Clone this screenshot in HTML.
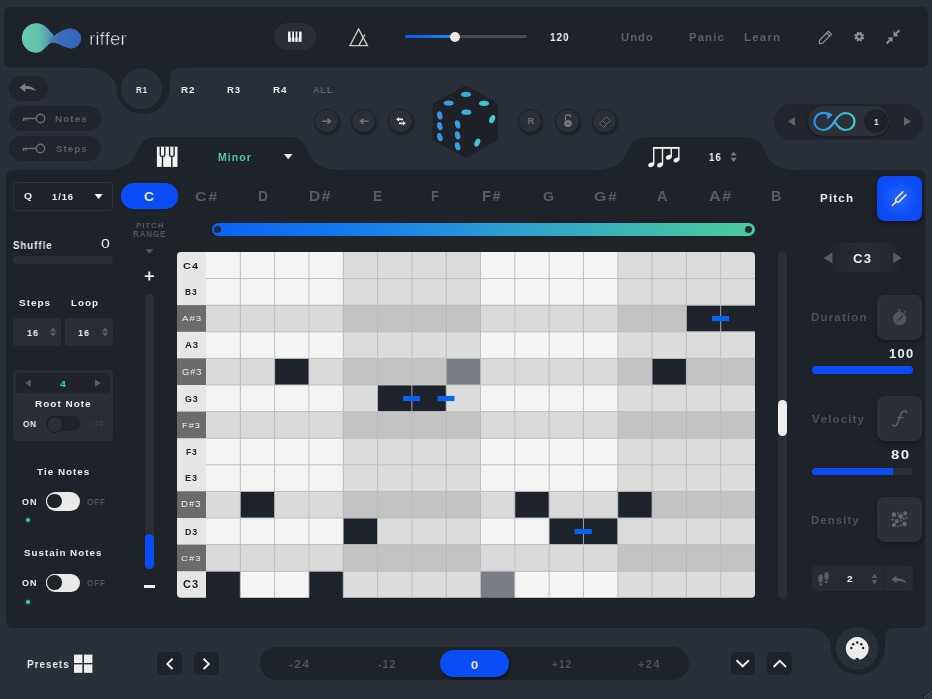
<!DOCTYPE html>
<html><head><meta charset="utf-8"><style>
html,body{margin:0;padding:0;}
body{width:932px;height:699px;overflow:hidden;background:#292f38;position:relative;font-family:"Liberation Sans", sans-serif;}
.abs{position:absolute;}
.t{position:absolute;white-space:nowrap;-webkit-font-smoothing:antialiased;will-change:transform;font-kerning:none;}
</style></head><body>
<svg class="abs" width="932" height="699" viewBox="0 0 932 699" style="left:0;top:0"><rect x="4" y="7" width="924" height="60.5" rx="6" fill="#1e232a"/><path d="M80,60 H190 V67.9 H179.8 Q169.8,67.9 169.8,77.9 V87.5 A27,26.5 0 0 1 142.8,114 A26.5,26.5 0 0 1 116.3,87.5 C116.3,78 104,67.9 88,67.9 H80 Z" fill="#1e232a"/><circle cx="141.5" cy="88.7" r="20.4" fill="#292f38"/><rect x="6" y="170" width="919.5" height="458" rx="7" fill="#1e232a"/><path d="M103,171 V170 C127,170 134,160 137.3,151.5 C140.3,143 145,136.9 157,136.9 H289 C300,136.9 305,143 308,151.5 C311,160 318,170 342,170 V171 Z" fill="#1e232a"/><path d="M593,171 V170 C617,170 624,160 627.3,151.5 C630.3,143 635,136.9 647,136.9 H746 C757,136.9 762,143 765,151.5 C768,160 775,170 799,170 V171 Z" fill="#1e232a"/><path d="M800,620 H900 V627.8 H895 Q885,627.8 885,637.8 V648.3 A27,26.3 0 0 1 858,674.6 A27,26.3 0 0 1 831,648.3 C831,637 821,628 805,627.8 H800 Z" fill="#1e232a"/><circle cx="857.2" cy="648.3" r="21.3" fill="#292f38"/></svg><svg class="abs" style="left:0;top:0" width="140" height="70" viewBox="0 0 140 70">
<defs><linearGradient id="lg" x1="21" y1="0" x2="82" y2="0" gradientUnits="userSpaceOnUse">
<stop offset="0" stop-color="#6acaac"/><stop offset="0.3" stop-color="#62c1ab"/><stop offset="0.5" stop-color="#4c95b6"/><stop offset="0.62" stop-color="#3a6cbd"/><stop offset="1" stop-color="#3363bd"/></linearGradient></defs>
<path d="M36.6,23.3 C44.8,23.3 49.2,30.6 54.4,35.9 C59,31.6 64.6,28.5 71.2,28.5 A9.95,9.95 0 0 1 71.2,48.4 C64.2,48.4 58.6,42.6 52.7,42.6 C47.2,42.6 44.4,52.8 36.6,52.8 A14.75,14.75 0 0 1 36.6,23.3 Z" fill="url(#lg)"/>
<path d="M47,42.8 C50,38 52,36.4 54.4,35.9 C57,38.5 58.8,40.6 60.6,44.4 C58,43.3 55.5,42.6 52.7,42.6 C50.7,42.6 49,42.7 47,42.8 Z" fill="#4a70b8" opacity="0.55"/>
</svg><div class="t" style="left:88.85px;top:29.74px;font-size:18.519px;line-height:18.519px;color:#f6f6f6;font-weight:normal;letter-spacing:0.000px;transform:scaleX(1.020);transform-origin:0 0;-webkit-text-stroke:0.55px #1e232a;">riffer</div><div class="abs" style="left:274px;top:23px;width:42px;height:27px;border-radius:13.5px;background:#2a2d35"></div><svg class="abs" style="left:287px;top:31px" width="16" height="12" viewBox="0 0 16 12">
<rect x="1" y="0.6" width="13.6" height="10.2" fill="#efefef"/>
<path d="M4.4,0.6 V6.5 M7.8,0.6 V6.5 M11.2,0.6 V6.5" stroke="#1e232a" stroke-width="1.6"/>
<path d="M4.4,6 V10.8 M7.8,6 V10.8 M11.2,6 V10.8" stroke="#1e232a" stroke-width="0.8"/>
</svg><svg class="abs" style="left:345px;top:24px" width="28" height="26" viewBox="345 24 28 26">
<path d="M358.6,29 L350,45.6 H367.4 Z" fill="none" stroke="#c6c6c6" stroke-width="1.4" stroke-linejoin="miter"/>
<path d="M364.8,34.5 L358.8,45.6" fill="none" stroke="#c6c6c6" stroke-width="1.4"/>
</svg><div class="abs" style="left:405px;top:35.3px;width:121.5px;height:3px;border-radius:1.5px;background:#484b53"></div><div class="abs" style="left:405px;top:35.3px;width:50px;height:3px;border-radius:1.5px;background:linear-gradient(90deg,#0a5cf5,#1b86f0)"></div><div class="abs" style="left:450px;top:32px;width:10px;height:10px;border-radius:5px;background:#e9e9e9"></div><div class="t" style="left:549.58px;top:31.76px;font-size:11.017px;line-height:11.017px;color:#f0f0f0;font-weight:bold;letter-spacing:1.102px;transform:scaleX(0.900);transform-origin:0 0;">120</div><div class="t" style="left:621.33px;top:32.04px;font-size:11.166px;line-height:11.166px;color:#5b5f67;font-weight:bold;letter-spacing:1.117px;transform:scaleX(0.995);transform-origin:0 0;">Undo</div><div class="t" style="left:688.94px;top:32.62px;font-size:10.485px;line-height:10.485px;color:#5b5f67;font-weight:bold;letter-spacing:1.049px;transform:scaleX(1.082);transform-origin:0 0;">Panic</div><div class="t" style="left:744.22px;top:32.15px;font-size:11.035px;line-height:11.035px;color:#5b5f67;font-weight:bold;letter-spacing:1.104px;transform:scaleX(1.050);transform-origin:0 0;">Learn</div><svg class="abs" style="left:815px;top:26px" width="22" height="22" viewBox="815 26 22 22">
<path d="M828.3,31.2 L831.4,34.3 L822.6,43.1 L819.3,43.5 L819.6,40.2 Z M826.6,32.9 L829.7,36" fill="none" stroke="#8b8e93" stroke-width="1.3" stroke-linejoin="round"/>
</svg><svg class="abs" style="left:852px;top:30px" width="14" height="14" viewBox="852 30 14 14">
<path d="M864.21,37.56 L863.45,39.39 L861.85,38.99 L861.69,39.15 L862.09,40.75 L860.26,41.51 L859.41,40.10 L859.19,40.10 L858.34,41.51 L856.51,40.75 L856.91,39.15 L856.75,38.99 L855.15,39.39 L854.39,37.56 L855.80,36.71 L855.80,36.49 L854.39,35.64 L855.15,33.81 L856.75,34.21 L856.91,34.05 L856.51,32.45 L858.34,31.69 L859.19,33.10 L859.41,33.10 L860.26,31.69 L862.09,32.45 L861.69,34.05 L861.85,34.21 L863.45,33.81 L864.21,35.64 L862.80,36.49 L862.80,36.71 Z M861.00,36.6 A1.7,1.7 0 1 0 857.60,36.6 A1.7,1.7 0 1 0 861.00,36.6 Z" fill="#8b8e93" fill-rule="evenodd"/>
</svg><svg class="abs" style="left:884px;top:28px" width="18" height="18" viewBox="884 28 18 18">
<path d="M893.3,36.4 L893.5,31.1 L898.6,36.2 Z M892.7,37.2 L887.4,37.4 L892.5,42.5 Z" fill="#8b8e93"/>
<path d="M895.6,34 L899.3,30.3 M890.2,39.8 L886.6,43.4" stroke="#8b8e93" stroke-width="2.1"/>
</svg><div class="abs" style="left:9px;top:75.5px;width:38.5px;height:25px;border-radius:12.5px;background:#21242c"></div><svg class="abs" style="left:15px;top:80px" width="26" height="16" viewBox="15 80 26 16">
<path d="M19.5,87.6 L25.2,83.2 V86.1 C30.5,86.1 33.8,87.6 36.2,91.3 C33.4,89.3 30,88.9 25.2,88.9 V92 Z" fill="#7d8086"/>
</svg><div class="abs" style="left:9px;top:105.5px;width:92px;height:25px;border-radius:12.5px;background:#21242c"></div><svg class="abs" style="left:20px;top:105.5px" width="30" height="25" viewBox="20 105.5 30 25">
<circle cx="40.5" cy="118.0" r="4.2" fill="none" stroke="#6b6e74" stroke-width="1.4"/>
<path d="M23,118.0 H36.3 M23.6,118.0 V120.6 M26,118.0 V120.0" stroke="#6b6e74" stroke-width="1.4"/>
</svg><div class="abs" style="left:9px;top:136px;width:92px;height:25px;border-radius:12.5px;background:#21242c"></div><svg class="abs" style="left:20px;top:136px" width="30" height="25" viewBox="20 136 30 25">
<circle cx="40.5" cy="148.5" r="4.2" fill="none" stroke="#6b6e74" stroke-width="1.4"/>
<path d="M23,148.5 H36.3 M23.6,148.5 V151.1 M26,148.5 V150.5" stroke="#6b6e74" stroke-width="1.4"/>
</svg><div class="t" style="left:55.23px;top:114.54px;font-size:9.172px;line-height:9.172px;color:#5b5f67;font-weight:bold;letter-spacing:0.917px;transform:scaleX(1.090);transform-origin:0 0;">Notes</div><div class="t" style="left:56.12px;top:145.06px;font-size:9.053px;line-height:9.053px;color:#5b5f67;font-weight:bold;letter-spacing:0.905px;transform:scaleX(1.085);transform-origin:0 0;">Steps</div><div class="t" style="left:135.65px;top:84.88px;font-size:9.593px;line-height:9.593px;color:#ececec;font-weight:bold;letter-spacing:0.881px;transform:scaleX(0.850);transform-origin:0 0;">R1</div><div class="t" style="left:180.65px;top:85.08px;font-size:9.596px;line-height:9.596px;color:#ececec;font-weight:bold;letter-spacing:0.960px;transform:scaleX(1.016);transform-origin:0 0;">R2</div><div class="t" style="left:227.16px;top:85.10px;font-size:9.444px;line-height:9.444px;color:#ececec;font-weight:bold;letter-spacing:0.944px;transform:scaleX(1.013);transform-origin:0 0;">R3</div><div class="t" style="left:272.64px;top:84.95px;font-size:9.739px;line-height:9.739px;color:#ececec;font-weight:bold;letter-spacing:0.974px;transform:scaleX(1.014);transform-origin:0 0;">R4</div><div class="t" style="left:313.28px;top:84.95px;font-size:9.739px;line-height:9.739px;color:#5f636b;font-weight:bold;letter-spacing:0.974px;transform:scaleX(0.924);transform-origin:0 0;">ALL</div><div class="abs" style="left:314.4px;top:108.7px;width:22.4px;height:22.4px;border-radius:50%;background:#2a2f38;border:1.4px solid #1b1e24;box-shadow:1px 2px 3px rgba(0,0,0,0.35)"></div><svg class="abs" style="left:317px;top:111px" width="20" height="20" viewBox="317 111 20 20"><path d="M322.5,121.3 H330 M327.5,118.8 L330.5,121.3 L327.5,123.8" fill="none" stroke="#6f7278" stroke-width="1.6"/></svg><div class="abs" style="left:351.4px;top:108.7px;width:22.4px;height:22.4px;border-radius:50%;background:#2a2f38;border:1.4px solid #1b1e24;box-shadow:1px 2px 3px rgba(0,0,0,0.35)"></div><svg class="abs" style="left:354px;top:111px" width="20" height="20" viewBox="354 111 20 20"><path d="M368.5,121.3 H361 M363.5,118.8 L360.5,121.3 L363.5,123.8" fill="none" stroke="#6f7278" stroke-width="1.6"/></svg><div class="abs" style="left:388.2px;top:108.7px;width:22.4px;height:22.4px;border-radius:50%;background:#2a2f38;border:1.4px solid #1b1e24;box-shadow:1px 2px 3px rgba(0,0,0,0.35)"></div><svg class="abs" style="left:391px;top:111px" width="20" height="20" viewBox="391 111 20 20"><path d="M396,119.3 L399,117 V118.5 H403 V120.2 H399 V121.6 Z M406,123.3 L403,121 V122.5 H399 V124.2 H403 V125.6 Z" fill="#f0f0f0"/></svg><div class="abs" style="left:518.1px;top:108.7px;width:22.4px;height:22.4px;border-radius:50%;background:#2a2f38;border:1.4px solid #1b1e24;box-shadow:1px 2px 3px rgba(0,0,0,0.35)"></div><div class="t" style="left:520.7px;top:116.9px;width:20px;text-align:center;font-size:9px;line-height:9px;color:#6a6d73;font-weight:bold">R</div><div class="abs" style="left:555.4px;top:108.7px;width:22.4px;height:22.4px;border-radius:50%;background:#2a2f38;border:1.4px solid #1b1e24;box-shadow:1px 2px 3px rgba(0,0,0,0.35)"></div><svg class="abs" style="left:558px;top:111px" width="20" height="20" viewBox="558 111 20 20"><path d="M565.4,120 V117.3 A2.6,2.6 0 0 1 570.6,117.3" fill="none" stroke="#6f7278" stroke-width="1.3"/><circle cx="568" cy="123.5" r="3.8" fill="#6f7278"/><circle cx="568" cy="123.5" r="0.8" fill="#2b2f38"/></svg><div class="abs" style="left:592.4px;top:108.7px;width:22.4px;height:22.4px;border-radius:50%;background:#2a2f38;border:1.4px solid #1b1e24;box-shadow:1px 2px 3px rgba(0,0,0,0.35)"></div><svg class="abs" style="left:595px;top:111px" width="20" height="20" viewBox="595 111 20 20"><path d="M602.5,126.5 L599.5,123.5 L606.5,116.5 L610.5,120.5 L603.5,127.5 Z M602.5,120.5 L606.5,124.5" fill="none" stroke="#60636a" stroke-width="1"/></svg><svg class="abs" style="left:425px;top:80px" width="80" height="85" viewBox="425 80 80 85">
<path d="M465.7,90 L494,105.8 L494,137.6 L465.7,153.6 L436.6,137.6 L436.6,105.8 Z" fill="#1e2128" stroke="#1e2128" stroke-width="8" stroke-linejoin="round"/>
<ellipse cx="466" cy="94.3" rx="5" ry="2.6" transform="rotate(0 466 94.3)" fill="#3aa9dc"/><ellipse cx="448.7" cy="103.1" rx="5" ry="2.6" transform="rotate(0 448.7 103.1)" fill="#3a9de0"/><ellipse cx="484" cy="103.3" rx="5" ry="2.6" transform="rotate(0 484 103.3)" fill="#3cc7d4"/><ellipse cx="466.3" cy="112.2" rx="5" ry="2.6" transform="rotate(0 466.3 112.2)" fill="#3ab0da"/><ellipse cx="439.8" cy="115.5" rx="2.6" ry="4.2" transform="rotate(-15 439.8 115.5)" fill="#3a8fe6"/><ellipse cx="439.8" cy="126.2" rx="2.6" ry="4.2" transform="rotate(-15 439.8 126.2)" fill="#3a8fe6"/><ellipse cx="439.8" cy="137.1" rx="2.6" ry="4.2" transform="rotate(-15 439.8 137.1)" fill="#3a92e4"/><ellipse cx="457.6" cy="124.4" rx="2.6" ry="4.2" transform="rotate(-15 457.6 124.4)" fill="#3a9be0"/><ellipse cx="457.6" cy="135.3" rx="2.6" ry="4.2" transform="rotate(-15 457.6 135.3)" fill="#3a9ce0"/><ellipse cx="457.6" cy="146.3" rx="2.6" ry="4.2" transform="rotate(-15 457.6 146.3)" fill="#3aa0de"/><ellipse cx="492.2" cy="119.1" rx="2.6" ry="4.3" transform="rotate(25 492.2 119.1)" fill="#3fd1cf"/><ellipse cx="477.3" cy="142.6" rx="2.6" ry="4.3" transform="rotate(25 477.3 142.6)" fill="#3cc4d2"/></svg><div class="abs" style="left:774px;top:104px;width:149px;height:35.5px;border-radius:18px;background:#22252d"></div><div class="abs" style="left:807.5px;top:106.2px;width:81.5px;height:29.6px;border-radius:15px;background:#2c3039;box-shadow:0 1px 3px rgba(0,0,0,0.4)"></div><div class="abs" style="left:864.2px;top:109.4px;width:24px;height:24px;border-radius:12px;background:#1e2128"></div><div class="t" style="left:873.58px;top:117.05px;font-size:9.739px;line-height:9.739px;color:#f0f0f0;font-weight:bold;letter-spacing:0.000px;transform:scaleX(0.850);transform-origin:0 0;">1</div><svg class="abs" style="left:785px;top:112px" width="130" height="18" viewBox="785 112 130 18"><path d="M788,121.4 L795,117 V125.8 Z" fill="#5f636a"/><path d="M911,121.4 L904,117 V125.8 Z" fill="#5f636a"/></svg><svg class="abs" style="left:810px;top:108px" width="50" height="26" viewBox="810 108 50 26">
<defs><linearGradient id="inf" x1="813" y1="0" x2="855" y2="0" gradientUnits="userSpaceOnUse"><stop offset="0" stop-color="#2f8ae8"/><stop offset="1" stop-color="#3fd0d0"/></linearGradient></defs>
<path d="M831,115 C827,112.5 823,112.5 820,113.5 C815.5,115.5 814.5,120 814.5,122 C814.5,126 818,130 823.5,130 C829.5,130 833,124 834.5,121.5 C836,119 839.5,113 845.5,113 C851,113 854.5,117 854.5,121.5 C854.5,126 851,130 845.5,130 C839.5,130 836,124 834.5,121.5" fill="none" stroke="url(#inf)" stroke-width="2.2" stroke-linecap="round"/>
<path d="M826,111.8 L832.6,114.6 L827.6,119.6 Z" fill="#2f95e6"/>
</svg><svg class="abs" style="left:155px;top:145px" width="25" height="24" viewBox="155 145 25 24">
<rect x="156.9" y="146.7" width="20.6" height="20.2" fill="#f2f2f2"/>
<path d="M160.3,146.7 V155 Q160.3,156.4 161.7,156.4 H163.4 Q164.8,156.4 164.8,155 V146.7" fill="none" stroke="#1e232a" stroke-width="1.4"/>
<path d="M169.6,146.7 V155 Q169.6,156.4 171,156.4 H172.7 Q174.1,156.4 174.1,155 V146.7" fill="none" stroke="#1e232a" stroke-width="1.4"/>
<path d="M162.5,156.4 V167 M171.8,156.4 V167" stroke="#1e232a" stroke-width="1.4"/>
</svg><div class="t" style="left:218.49px;top:152.57px;font-size:10.077px;line-height:10.077px;color:#4fcb9e;font-weight:bold;letter-spacing:1.008px;transform:scaleX(1.048);transform-origin:0 0;">Minor</div><svg class="abs" style="left:280px;top:150px" width="16" height="14" viewBox="280 150 16 14"><path d="M283.9,154 H292.5 L288.2,159.3 Z" fill="#f0f0f0"/></svg><svg class="abs" style="left:645px;top:144px" width="38" height="26" viewBox="645 144 38 26">
<path d="M652.9,147.9 H679.4" stroke="#f0f0f0" stroke-width="1.9"/>
<path d="M653.7,147 V164.3 M662.5,147 V164.3 M671.3,147 V156.8 M678.8,147 V159.5" stroke="#f0f0f0" stroke-width="1.4"/>
<ellipse cx="651.2" cy="164.8" rx="3.1" ry="2.2" fill="#f0f0f0" transform="rotate(-25 651.2 164.8)"/>
<ellipse cx="660" cy="165" rx="3.1" ry="2.2" fill="#f0f0f0" transform="rotate(-25 660 165)"/>
<ellipse cx="668.8" cy="157.2" rx="3.1" ry="2.2" fill="#f0f0f0" transform="rotate(-25 668.8 157.2)"/>
<ellipse cx="676.5" cy="159.9" rx="3.1" ry="2.2" fill="#f0f0f0" transform="rotate(-25 676.5 159.9)"/>
</svg><div class="t" style="left:708.59px;top:152.09px;font-size:10.876px;line-height:10.876px;color:#f0f0f0;font-weight:bold;letter-spacing:1.088px;transform:scaleX(0.884);transform-origin:0 0;">16</div><svg class="abs" style="left:727px;top:149px" width="12" height="16" viewBox="727 149 12 16"><path d="M730.4,155.5 L733.6,151.8 L736.8,155.5 Z M730.4,157.8 L733.6,161.9 L736.8,157.8 Z" fill="#76797f"/></svg><div class="abs" style="left:13px;top:182px;width:97.5px;height:27px;border-radius:4px;border:1px solid #30343c"></div><div class="t" style="left:23.67px;top:191.97px;font-size:9.200px;line-height:9.200px;color:#ececec;font-weight:bold;letter-spacing:0.000px;transform:scaleX(1.126);transform-origin:0 0;">Q</div><div class="t" style="left:51.71px;top:193.03px;font-size:8.729px;line-height:8.729px;color:#ececec;font-weight:bold;letter-spacing:0.873px;transform:scaleX(1.072);transform-origin:0 0;">1/16</div><svg class="abs" style="left:92px;top:191px" width="12" height="10" viewBox="92 191 12 10"><path d="M94.7,194 H102.6 L98.65,199.2 Z" fill="#f0f0f0"/></svg><div class="t" style="left:13.42px;top:240.55px;font-size:10.213px;line-height:10.213px;color:#ececec;font-weight:bold;letter-spacing:1.021px;transform:scaleX(0.950);transform-origin:0 0;">Shuffle</div><div class="t" style="left:100.68px;top:237.58px;font-size:12.288px;line-height:12.288px;color:#f2f2f2;font-weight:normal;letter-spacing:0.000px;transform:scaleX(1.300);transform-origin:0 0;">0</div><div class="abs" style="left:13px;top:256.2px;width:100px;height:7.4px;border-radius:3.7px;background:#2a2d35"></div><div class="t" style="left:19.11px;top:297.99px;font-size:9.495px;line-height:9.495px;color:#ececec;font-weight:bold;letter-spacing:0.949px;transform:scaleX(1.052);transform-origin:0 0;">Steps</div><div class="t" style="left:71.14px;top:297.88px;font-size:9.603px;line-height:9.603px;color:#ececec;font-weight:bold;letter-spacing:0.960px;transform:scaleX(1.027);transform-origin:0 0;">Loop</div><div class="abs" style="left:13px;top:317.8px;width:48.3px;height:28px;border-radius:3px;background:#292d35"></div><div class="t" style="left:26.83px;top:328.00px;font-size:9.463px;line-height:9.463px;color:#ececec;font-weight:bold;letter-spacing:0.946px;transform:scaleX(0.959);transform-origin:0 0;">16</div><svg class="abs" style="left:47px;top:325px" width="12" height="14" viewBox="47 325 12 14"><path d="M50,331.5 L53.1,327.6 L56.2,331.5 Z M50,332.8 L53.1,336.7 L56.2,332.8 Z" fill="#5a5d64"/></svg><div class="abs" style="left:64.5px;top:317.8px;width:48.3px;height:28px;border-radius:3px;background:#292d35"></div><div class="t" style="left:78.43px;top:328.00px;font-size:9.463px;line-height:9.463px;color:#ececec;font-weight:bold;letter-spacing:0.946px;transform:scaleX(0.959);transform-origin:0 0;">16</div><svg class="abs" style="left:98.5px;top:325px" width="12" height="14" viewBox="98.5 325 12 14"><path d="M101.5,331.5 L104.6,327.6 L107.7,331.5 Z M101.5,332.8 L104.6,336.7 L107.7,332.8 Z" fill="#5a5d64"/></svg><div class="abs" style="left:13px;top:369.7px;width:100px;height:71.5px;border-radius:4px;background:#292d35"></div><div class="abs" style="left:16px;top:372.9px;width:94.3px;height:20px;border-radius:4px;background:#20232a"></div><svg class="abs" style="left:20px;top:376px" width="86" height="14" viewBox="20 376 86 14"><path d="M25,383 L30.7,379.3 V386.8 Z M100.9,383 L95.1,379.3 V386.8 Z" fill="#595c63"/></svg><div class="t" style="left:59.84px;top:378.83px;font-size:9.884px;line-height:9.884px;color:#2fd3a6;font-weight:bold;letter-spacing:0.000px;transform:scaleX(1.058);transform-origin:0 0;">4</div><div class="t" style="left:34.53px;top:399.74px;font-size:9.172px;line-height:9.172px;color:#ececec;font-weight:bold;letter-spacing:0.917px;transform:scaleX(1.089);transform-origin:0 0;">Root Note</div><div class="t" style="left:22.96px;top:420.08px;font-size:8.898px;line-height:8.898px;color:#ececec;font-weight:bold;letter-spacing:0.890px;transform:scaleX(0.919);transform-origin:0 0;">ON</div><div class="t" style="left:88.89px;top:420.08px;font-size:8.898px;line-height:8.898px;color:#3a3d44;font-weight:bold;letter-spacing:0.155px;transform:scaleX(0.850);transform-origin:0 0;">OFF</div><div class="abs" style="left:46.2px;top:416px;width:33.4px;height:15.4px;border-radius:7.7px;background:#1e232a"></div><div class="abs" style="left:46.5px;top:416.3px;width:14.8px;height:14.8px;border-radius:50%;background:#2a2e36;border:0.5px solid #1a1c22"></div><div class="t" style="left:36.99px;top:467.79px;font-size:9.123px;line-height:9.123px;color:#ececec;font-weight:bold;letter-spacing:0.912px;transform:scaleX(1.080);transform-origin:0 0;">Tie Notes</div><div class="abs" style="left:45.8px;top:492.2px;width:34.3px;height:18.8px;border-radius:9.4px;background:#e9e9e9"></div><div class="abs" style="left:46.3px;top:492.7px;width:14.6px;height:14.6px;border-radius:50%;background:#1e232a;border:1.6px solid #f0f0f0"></div><div class="t" style="left:22.03px;top:497.98px;font-size:8.898px;line-height:8.898px;color:#ececec;font-weight:bold;letter-spacing:0.890px;transform:scaleX(1.017);transform-origin:0 0;">ON</div><div class="t" style="left:87.46px;top:497.98px;font-size:8.898px;line-height:8.898px;color:#52565e;font-weight:bold;letter-spacing:0.890px;transform:scaleX(0.922);transform-origin:0 0;">OFF</div><div class="abs" style="left:25.8px;top:518.2px;width:4.2px;height:4.2px;border-radius:50%;background:#3dcf98;box-shadow:0 0 3px rgba(61,207,152,0.5)"></div><div class="t" style="left:24.02px;top:548.79px;font-size:9.123px;line-height:9.123px;color:#ececec;font-weight:bold;letter-spacing:0.912px;transform:scaleX(1.079);transform-origin:0 0;">Sustain Notes</div><div class="abs" style="left:45.8px;top:573.7px;width:34.3px;height:18.8px;border-radius:9.4px;background:#e9e9e9"></div><div class="abs" style="left:46.3px;top:574.2px;width:14.6px;height:14.6px;border-radius:50%;background:#1e232a;border:1.6px solid #f0f0f0"></div><div class="t" style="left:22.03px;top:579.46px;font-size:9.039px;line-height:9.039px;color:#ececec;font-weight:bold;letter-spacing:0.904px;">ON</div><div class="t" style="left:87.46px;top:579.46px;font-size:9.039px;line-height:9.039px;color:#52565e;font-weight:bold;letter-spacing:0.904px;transform:scaleX(0.907);transform-origin:0 0;">OFF</div><div class="abs" style="left:25.6px;top:599.5px;width:4.2px;height:4.2px;border-radius:50%;background:#3dcf98;box-shadow:0 0 3px rgba(61,207,152,0.5)"></div><div class="abs" style="left:121.2px;top:183px;width:57.2px;height:25.6px;border-radius:12.8px;background:#0a4cf6"></div><div class="t" style="left:143.92px;top:190.15px;font-size:13.135px;line-height:13.135px;color:#ececec;font-weight:bold;letter-spacing:0.000px;transform:scaleX(1.071);transform-origin:0 0;">C</div><div class="t" style="left:195.24px;top:189.91px;font-size:13.418px;line-height:13.418px;color:#585c64;font-weight:bold;letter-spacing:1.342px;transform:scaleX(1.196);transform-origin:0 0;">C#</div><div class="t" style="left:258.19px;top:189.71px;font-size:13.808px;line-height:13.808px;color:#585c64;font-weight:bold;letter-spacing:0.000px;transform:scaleX(0.980);transform-origin:0 0;">D</div><div class="t" style="left:309.26px;top:189.71px;font-size:13.808px;line-height:13.808px;color:#585c64;font-weight:bold;letter-spacing:1.381px;transform:scaleX(1.124);transform-origin:0 0;">D#</div><div class="t" style="left:372.81px;top:189.71px;font-size:13.808px;line-height:13.808px;color:#585c64;font-weight:bold;letter-spacing:0.000px;transform:scaleX(0.968);transform-origin:0 0;">E</div><div class="t" style="left:430.56px;top:189.71px;font-size:13.808px;line-height:13.808px;color:#585c64;font-weight:bold;letter-spacing:0.000px;transform:scaleX(0.914);transform-origin:0 0;">F</div><div class="t" style="left:481.52px;top:189.71px;font-size:13.808px;line-height:13.808px;color:#585c64;font-weight:bold;letter-spacing:1.381px;transform:scaleX(1.058);transform-origin:0 0;">F#</div><div class="t" style="left:543.22px;top:189.91px;font-size:13.418px;line-height:13.418px;color:#585c64;font-weight:bold;letter-spacing:0.000px;transform:scaleX(1.049);transform-origin:0 0;">G</div><div class="t" style="left:593.95px;top:189.91px;font-size:13.418px;line-height:13.418px;color:#585c64;font-weight:bold;letter-spacing:1.342px;transform:scaleX(1.180);transform-origin:0 0;">G#</div><div class="t" style="left:657.24px;top:189.71px;font-size:13.808px;line-height:13.808px;color:#585c64;font-weight:bold;letter-spacing:0.000px;transform:scaleX(1.058);transform-origin:0 0;">A</div><div class="t" style="left:708.50px;top:189.71px;font-size:13.808px;line-height:13.808px;color:#585c64;font-weight:bold;letter-spacing:1.381px;transform:scaleX(1.164);transform-origin:0 0;">A#</div><div class="t" style="left:771.35px;top:189.71px;font-size:13.808px;line-height:13.808px;color:#585c64;font-weight:bold;letter-spacing:0.000px;transform:scaleX(1.033);transform-origin:0 0;">B</div><div class="t" style="left:135.66px;top:221.80px;font-size:8.051px;line-height:8.051px;color:#51555d;font-weight:bold;letter-spacing:0.805px;transform:scaleX(1.008);transform-origin:0 0;">PITCH</div><div class="t" style="left:132.96px;top:231.38px;font-size:8.192px;line-height:8.192px;color:#51555d;font-weight:bold;letter-spacing:0.819px;transform:scaleX(0.981);transform-origin:0 0;">RANGE</div><svg class="abs" style="left:143px;top:247px" width="14" height="9" viewBox="143 247 14 9"><path d="M145.6,249.3 H153.4 L149.5,253.4 Z" fill="#585c64"/></svg><svg class="abs" style="left:140px;top:267px" width="20" height="20" viewBox="140 267 20 20"><path d="M149.3,271.6 V280.6 M144.8,276.1 H153.9" stroke="#f0f0f0" stroke-width="1.9"/></svg><div class="abs" style="left:145.3px;top:294px;width:8.4px;height:275px;border-radius:4.2px;background:#2a2e36"></div><div class="abs" style="left:144.9px;top:533.7px;width:9.1px;height:35px;border-radius:4.5px;background:#0a4cf6"></div><div class="abs" style="left:144px;top:585.2px;width:10.9px;height:2.5px;background:#f0f0f0"></div><div class="abs" style="left:211.5px;top:223.1px;width:543.7px;height:12.9px;border-radius:6.5px;background:linear-gradient(90deg,#0a63f6 0%,#157aee 25%,#2899d6 50%,#3bb4b7 75%,#4dca9b 100%)"></div><div class="abs" style="left:214.3px;top:226.1px;width:6.8px;height:6.8px;border-radius:50%;background:#262a36"></div><div class="abs" style="left:745px;top:226.1px;width:6.8px;height:6.8px;border-radius:50%;background:#262a36"></div><svg class="abs" style="left:0;top:0" width="932" height="699" viewBox="0 0 932 699"><clipPath id="gc"><rect x="177" y="252" width="578" height="345.79999999999995" rx="4"/></clipPath><g clip-path="url(#gc)"><rect x="177" y="252.00" width="29" height="27.10" fill="#e6e6e6"/><rect x="206.00" y="252.00" width="34.61" height="26.90" fill="#f4f4f4"/><rect x="240.31" y="252.00" width="34.61" height="26.90" fill="#f4f4f4"/><rect x="274.62" y="252.00" width="34.61" height="26.90" fill="#f4f4f4"/><rect x="308.94" y="252.00" width="34.61" height="26.90" fill="#f4f4f4"/><rect x="343.25" y="252.00" width="34.61" height="26.90" fill="#dcdcdc"/><rect x="377.56" y="252.00" width="34.61" height="26.90" fill="#dcdcdc"/><rect x="411.88" y="252.00" width="34.61" height="26.90" fill="#dcdcdc"/><rect x="446.19" y="252.00" width="34.61" height="26.90" fill="#dcdcdc"/><rect x="480.50" y="252.00" width="34.61" height="26.90" fill="#f4f4f4"/><rect x="514.81" y="252.00" width="34.61" height="26.90" fill="#f4f4f4"/><rect x="549.12" y="252.00" width="34.61" height="26.90" fill="#f4f4f4"/><rect x="583.44" y="252.00" width="34.61" height="26.90" fill="#f4f4f4"/><rect x="617.75" y="252.00" width="34.61" height="26.90" fill="#dcdcdc"/><rect x="652.06" y="252.00" width="34.61" height="26.90" fill="#dcdcdc"/><rect x="686.38" y="252.00" width="34.61" height="26.90" fill="#dcdcdc"/><rect x="720.69" y="252.00" width="34.61" height="26.90" fill="#dcdcdc"/><rect x="177" y="278.60" width="29" height="27.10" fill="#e6e6e6"/><rect x="206.00" y="278.60" width="34.61" height="26.90" fill="#f4f4f4"/><rect x="240.31" y="278.60" width="34.61" height="26.90" fill="#f4f4f4"/><rect x="274.62" y="278.60" width="34.61" height="26.90" fill="#f4f4f4"/><rect x="308.94" y="278.60" width="34.61" height="26.90" fill="#f4f4f4"/><rect x="343.25" y="278.60" width="34.61" height="26.90" fill="#dcdcdc"/><rect x="377.56" y="278.60" width="34.61" height="26.90" fill="#dcdcdc"/><rect x="411.88" y="278.60" width="34.61" height="26.90" fill="#dcdcdc"/><rect x="446.19" y="278.60" width="34.61" height="26.90" fill="#dcdcdc"/><rect x="480.50" y="278.60" width="34.61" height="26.90" fill="#f4f4f4"/><rect x="514.81" y="278.60" width="34.61" height="26.90" fill="#f4f4f4"/><rect x="549.12" y="278.60" width="34.61" height="26.90" fill="#f4f4f4"/><rect x="583.44" y="278.60" width="34.61" height="26.90" fill="#f4f4f4"/><rect x="617.75" y="278.60" width="34.61" height="26.90" fill="#dcdcdc"/><rect x="652.06" y="278.60" width="34.61" height="26.90" fill="#dcdcdc"/><rect x="686.38" y="278.60" width="34.61" height="26.90" fill="#dcdcdc"/><rect x="720.69" y="278.60" width="34.61" height="26.90" fill="#dcdcdc"/><rect x="177" y="305.20" width="29" height="27.10" fill="#6b6b6b"/><rect x="206.00" y="305.20" width="34.61" height="26.90" fill="#dadada"/><rect x="240.31" y="305.20" width="34.61" height="26.90" fill="#dadada"/><rect x="274.62" y="305.20" width="34.61" height="26.90" fill="#dadada"/><rect x="308.94" y="305.20" width="34.61" height="26.90" fill="#dadada"/><rect x="343.25" y="305.20" width="34.61" height="26.90" fill="#c3c3c3"/><rect x="377.56" y="305.20" width="34.61" height="26.90" fill="#c3c3c3"/><rect x="411.88" y="305.20" width="34.61" height="26.90" fill="#c3c3c3"/><rect x="446.19" y="305.20" width="34.61" height="26.90" fill="#c3c3c3"/><rect x="480.50" y="305.20" width="34.61" height="26.90" fill="#dadada"/><rect x="514.81" y="305.20" width="34.61" height="26.90" fill="#dadada"/><rect x="549.12" y="305.20" width="34.61" height="26.90" fill="#dadada"/><rect x="583.44" y="305.20" width="34.61" height="26.90" fill="#dadada"/><rect x="617.75" y="305.20" width="34.61" height="26.90" fill="#c3c3c3"/><rect x="652.06" y="305.20" width="34.61" height="26.90" fill="#c3c3c3"/><rect x="686.38" y="305.20" width="34.61" height="26.90" fill="#1e222a"/><rect x="720.69" y="305.20" width="34.61" height="26.90" fill="#1e222a"/><rect x="177" y="331.80" width="29" height="27.10" fill="#e6e6e6"/><rect x="206.00" y="331.80" width="34.61" height="26.90" fill="#f4f4f4"/><rect x="240.31" y="331.80" width="34.61" height="26.90" fill="#f4f4f4"/><rect x="274.62" y="331.80" width="34.61" height="26.90" fill="#f4f4f4"/><rect x="308.94" y="331.80" width="34.61" height="26.90" fill="#f4f4f4"/><rect x="343.25" y="331.80" width="34.61" height="26.90" fill="#dcdcdc"/><rect x="377.56" y="331.80" width="34.61" height="26.90" fill="#dcdcdc"/><rect x="411.88" y="331.80" width="34.61" height="26.90" fill="#dcdcdc"/><rect x="446.19" y="331.80" width="34.61" height="26.90" fill="#dcdcdc"/><rect x="480.50" y="331.80" width="34.61" height="26.90" fill="#f4f4f4"/><rect x="514.81" y="331.80" width="34.61" height="26.90" fill="#f4f4f4"/><rect x="549.12" y="331.80" width="34.61" height="26.90" fill="#f4f4f4"/><rect x="583.44" y="331.80" width="34.61" height="26.90" fill="#f4f4f4"/><rect x="617.75" y="331.80" width="34.61" height="26.90" fill="#dcdcdc"/><rect x="652.06" y="331.80" width="34.61" height="26.90" fill="#dcdcdc"/><rect x="686.38" y="331.80" width="34.61" height="26.90" fill="#dcdcdc"/><rect x="720.69" y="331.80" width="34.61" height="26.90" fill="#dcdcdc"/><rect x="177" y="358.40" width="29" height="27.10" fill="#6b6b6b"/><rect x="206.00" y="358.40" width="34.61" height="26.90" fill="#dadada"/><rect x="240.31" y="358.40" width="34.61" height="26.90" fill="#dadada"/><rect x="274.62" y="358.40" width="34.61" height="26.90" fill="#1e222a"/><rect x="308.94" y="358.40" width="34.61" height="26.90" fill="#dadada"/><rect x="343.25" y="358.40" width="34.61" height="26.90" fill="#c3c3c3"/><rect x="377.56" y="358.40" width="34.61" height="26.90" fill="#c3c3c3"/><rect x="411.88" y="358.40" width="34.61" height="26.90" fill="#c3c3c3"/><rect x="446.19" y="358.40" width="34.61" height="26.90" fill="#7a7e84"/><rect x="480.50" y="358.40" width="34.61" height="26.90" fill="#dadada"/><rect x="514.81" y="358.40" width="34.61" height="26.90" fill="#dadada"/><rect x="549.12" y="358.40" width="34.61" height="26.90" fill="#dadada"/><rect x="583.44" y="358.40" width="34.61" height="26.90" fill="#dadada"/><rect x="617.75" y="358.40" width="34.61" height="26.90" fill="#c3c3c3"/><rect x="652.06" y="358.40" width="34.61" height="26.90" fill="#1e222a"/><rect x="686.38" y="358.40" width="34.61" height="26.90" fill="#c3c3c3"/><rect x="720.69" y="358.40" width="34.61" height="26.90" fill="#c3c3c3"/><rect x="177" y="385.00" width="29" height="27.10" fill="#e6e6e6"/><rect x="206.00" y="385.00" width="34.61" height="26.90" fill="#f4f4f4"/><rect x="240.31" y="385.00" width="34.61" height="26.90" fill="#f4f4f4"/><rect x="274.62" y="385.00" width="34.61" height="26.90" fill="#f4f4f4"/><rect x="308.94" y="385.00" width="34.61" height="26.90" fill="#f4f4f4"/><rect x="343.25" y="385.00" width="34.61" height="26.90" fill="#dcdcdc"/><rect x="377.56" y="385.00" width="34.61" height="26.90" fill="#1e222a"/><rect x="411.88" y="385.00" width="34.61" height="26.90" fill="#1e222a"/><rect x="446.19" y="385.00" width="34.61" height="26.90" fill="#dcdcdc"/><rect x="480.50" y="385.00" width="34.61" height="26.90" fill="#f4f4f4"/><rect x="514.81" y="385.00" width="34.61" height="26.90" fill="#f4f4f4"/><rect x="549.12" y="385.00" width="34.61" height="26.90" fill="#f4f4f4"/><rect x="583.44" y="385.00" width="34.61" height="26.90" fill="#f4f4f4"/><rect x="617.75" y="385.00" width="34.61" height="26.90" fill="#dcdcdc"/><rect x="652.06" y="385.00" width="34.61" height="26.90" fill="#dcdcdc"/><rect x="686.38" y="385.00" width="34.61" height="26.90" fill="#dcdcdc"/><rect x="720.69" y="385.00" width="34.61" height="26.90" fill="#dcdcdc"/><rect x="177" y="411.60" width="29" height="27.10" fill="#6b6b6b"/><rect x="206.00" y="411.60" width="34.61" height="26.90" fill="#dadada"/><rect x="240.31" y="411.60" width="34.61" height="26.90" fill="#dadada"/><rect x="274.62" y="411.60" width="34.61" height="26.90" fill="#dadada"/><rect x="308.94" y="411.60" width="34.61" height="26.90" fill="#dadada"/><rect x="343.25" y="411.60" width="34.61" height="26.90" fill="#c3c3c3"/><rect x="377.56" y="411.60" width="34.61" height="26.90" fill="#c3c3c3"/><rect x="411.88" y="411.60" width="34.61" height="26.90" fill="#c3c3c3"/><rect x="446.19" y="411.60" width="34.61" height="26.90" fill="#c3c3c3"/><rect x="480.50" y="411.60" width="34.61" height="26.90" fill="#dadada"/><rect x="514.81" y="411.60" width="34.61" height="26.90" fill="#dadada"/><rect x="549.12" y="411.60" width="34.61" height="26.90" fill="#dadada"/><rect x="583.44" y="411.60" width="34.61" height="26.90" fill="#dadada"/><rect x="617.75" y="411.60" width="34.61" height="26.90" fill="#c3c3c3"/><rect x="652.06" y="411.60" width="34.61" height="26.90" fill="#c3c3c3"/><rect x="686.38" y="411.60" width="34.61" height="26.90" fill="#c3c3c3"/><rect x="720.69" y="411.60" width="34.61" height="26.90" fill="#c3c3c3"/><rect x="177" y="438.20" width="29" height="27.10" fill="#e6e6e6"/><rect x="206.00" y="438.20" width="34.61" height="26.90" fill="#f4f4f4"/><rect x="240.31" y="438.20" width="34.61" height="26.90" fill="#f4f4f4"/><rect x="274.62" y="438.20" width="34.61" height="26.90" fill="#f4f4f4"/><rect x="308.94" y="438.20" width="34.61" height="26.90" fill="#f4f4f4"/><rect x="343.25" y="438.20" width="34.61" height="26.90" fill="#dcdcdc"/><rect x="377.56" y="438.20" width="34.61" height="26.90" fill="#dcdcdc"/><rect x="411.88" y="438.20" width="34.61" height="26.90" fill="#dcdcdc"/><rect x="446.19" y="438.20" width="34.61" height="26.90" fill="#dcdcdc"/><rect x="480.50" y="438.20" width="34.61" height="26.90" fill="#f4f4f4"/><rect x="514.81" y="438.20" width="34.61" height="26.90" fill="#f4f4f4"/><rect x="549.12" y="438.20" width="34.61" height="26.90" fill="#f4f4f4"/><rect x="583.44" y="438.20" width="34.61" height="26.90" fill="#f4f4f4"/><rect x="617.75" y="438.20" width="34.61" height="26.90" fill="#dcdcdc"/><rect x="652.06" y="438.20" width="34.61" height="26.90" fill="#dcdcdc"/><rect x="686.38" y="438.20" width="34.61" height="26.90" fill="#dcdcdc"/><rect x="720.69" y="438.20" width="34.61" height="26.90" fill="#dcdcdc"/><rect x="177" y="464.80" width="29" height="27.10" fill="#e6e6e6"/><rect x="206.00" y="464.80" width="34.61" height="26.90" fill="#f4f4f4"/><rect x="240.31" y="464.80" width="34.61" height="26.90" fill="#f4f4f4"/><rect x="274.62" y="464.80" width="34.61" height="26.90" fill="#f4f4f4"/><rect x="308.94" y="464.80" width="34.61" height="26.90" fill="#f4f4f4"/><rect x="343.25" y="464.80" width="34.61" height="26.90" fill="#dcdcdc"/><rect x="377.56" y="464.80" width="34.61" height="26.90" fill="#dcdcdc"/><rect x="411.88" y="464.80" width="34.61" height="26.90" fill="#dcdcdc"/><rect x="446.19" y="464.80" width="34.61" height="26.90" fill="#dcdcdc"/><rect x="480.50" y="464.80" width="34.61" height="26.90" fill="#f4f4f4"/><rect x="514.81" y="464.80" width="34.61" height="26.90" fill="#f4f4f4"/><rect x="549.12" y="464.80" width="34.61" height="26.90" fill="#f4f4f4"/><rect x="583.44" y="464.80" width="34.61" height="26.90" fill="#f4f4f4"/><rect x="617.75" y="464.80" width="34.61" height="26.90" fill="#dcdcdc"/><rect x="652.06" y="464.80" width="34.61" height="26.90" fill="#dcdcdc"/><rect x="686.38" y="464.80" width="34.61" height="26.90" fill="#dcdcdc"/><rect x="720.69" y="464.80" width="34.61" height="26.90" fill="#dcdcdc"/><rect x="177" y="491.40" width="29" height="27.10" fill="#6b6b6b"/><rect x="206.00" y="491.40" width="34.61" height="26.90" fill="#dadada"/><rect x="240.31" y="491.40" width="34.61" height="26.90" fill="#1e222a"/><rect x="274.62" y="491.40" width="34.61" height="26.90" fill="#dadada"/><rect x="308.94" y="491.40" width="34.61" height="26.90" fill="#dadada"/><rect x="343.25" y="491.40" width="34.61" height="26.90" fill="#c3c3c3"/><rect x="377.56" y="491.40" width="34.61" height="26.90" fill="#c3c3c3"/><rect x="411.88" y="491.40" width="34.61" height="26.90" fill="#c3c3c3"/><rect x="446.19" y="491.40" width="34.61" height="26.90" fill="#c3c3c3"/><rect x="480.50" y="491.40" width="34.61" height="26.90" fill="#dadada"/><rect x="514.81" y="491.40" width="34.61" height="26.90" fill="#1e222a"/><rect x="549.12" y="491.40" width="34.61" height="26.90" fill="#dadada"/><rect x="583.44" y="491.40" width="34.61" height="26.90" fill="#dadada"/><rect x="617.75" y="491.40" width="34.61" height="26.90" fill="#1e222a"/><rect x="652.06" y="491.40" width="34.61" height="26.90" fill="#c3c3c3"/><rect x="686.38" y="491.40" width="34.61" height="26.90" fill="#c3c3c3"/><rect x="720.69" y="491.40" width="34.61" height="26.90" fill="#c3c3c3"/><rect x="177" y="518.00" width="29" height="27.10" fill="#e6e6e6"/><rect x="206.00" y="518.00" width="34.61" height="26.90" fill="#f4f4f4"/><rect x="240.31" y="518.00" width="34.61" height="26.90" fill="#f4f4f4"/><rect x="274.62" y="518.00" width="34.61" height="26.90" fill="#f4f4f4"/><rect x="308.94" y="518.00" width="34.61" height="26.90" fill="#f4f4f4"/><rect x="343.25" y="518.00" width="34.61" height="26.90" fill="#1e222a"/><rect x="377.56" y="518.00" width="34.61" height="26.90" fill="#dcdcdc"/><rect x="411.88" y="518.00" width="34.61" height="26.90" fill="#dcdcdc"/><rect x="446.19" y="518.00" width="34.61" height="26.90" fill="#dcdcdc"/><rect x="480.50" y="518.00" width="34.61" height="26.90" fill="#f4f4f4"/><rect x="514.81" y="518.00" width="34.61" height="26.90" fill="#f4f4f4"/><rect x="549.12" y="518.00" width="34.61" height="26.90" fill="#1e222a"/><rect x="583.44" y="518.00" width="34.61" height="26.90" fill="#1e222a"/><rect x="617.75" y="518.00" width="34.61" height="26.90" fill="#dcdcdc"/><rect x="652.06" y="518.00" width="34.61" height="26.90" fill="#dcdcdc"/><rect x="686.38" y="518.00" width="34.61" height="26.90" fill="#dcdcdc"/><rect x="720.69" y="518.00" width="34.61" height="26.90" fill="#dcdcdc"/><rect x="177" y="544.60" width="29" height="27.10" fill="#6b6b6b"/><rect x="206.00" y="544.60" width="34.61" height="26.90" fill="#dadada"/><rect x="240.31" y="544.60" width="34.61" height="26.90" fill="#dadada"/><rect x="274.62" y="544.60" width="34.61" height="26.90" fill="#dadada"/><rect x="308.94" y="544.60" width="34.61" height="26.90" fill="#dadada"/><rect x="343.25" y="544.60" width="34.61" height="26.90" fill="#c3c3c3"/><rect x="377.56" y="544.60" width="34.61" height="26.90" fill="#c3c3c3"/><rect x="411.88" y="544.60" width="34.61" height="26.90" fill="#c3c3c3"/><rect x="446.19" y="544.60" width="34.61" height="26.90" fill="#c3c3c3"/><rect x="480.50" y="544.60" width="34.61" height="26.90" fill="#dadada"/><rect x="514.81" y="544.60" width="34.61" height="26.90" fill="#dadada"/><rect x="549.12" y="544.60" width="34.61" height="26.90" fill="#dadada"/><rect x="583.44" y="544.60" width="34.61" height="26.90" fill="#dadada"/><rect x="617.75" y="544.60" width="34.61" height="26.90" fill="#c3c3c3"/><rect x="652.06" y="544.60" width="34.61" height="26.90" fill="#c3c3c3"/><rect x="686.38" y="544.60" width="34.61" height="26.90" fill="#c3c3c3"/><rect x="720.69" y="544.60" width="34.61" height="26.90" fill="#c3c3c3"/><rect x="177" y="571.20" width="29" height="27.10" fill="#e6e6e6"/><rect x="206.00" y="571.20" width="34.61" height="26.90" fill="#1e222a"/><rect x="240.31" y="571.20" width="34.61" height="26.90" fill="#f4f4f4"/><rect x="274.62" y="571.20" width="34.61" height="26.90" fill="#f4f4f4"/><rect x="308.94" y="571.20" width="34.61" height="26.90" fill="#1e222a"/><rect x="343.25" y="571.20" width="34.61" height="26.90" fill="#dcdcdc"/><rect x="377.56" y="571.20" width="34.61" height="26.90" fill="#dcdcdc"/><rect x="411.88" y="571.20" width="34.61" height="26.90" fill="#dcdcdc"/><rect x="446.19" y="571.20" width="34.61" height="26.90" fill="#dcdcdc"/><rect x="480.50" y="571.20" width="34.61" height="26.90" fill="#7a7e84"/><rect x="514.81" y="571.20" width="34.61" height="26.90" fill="#f4f4f4"/><rect x="549.12" y="571.20" width="34.61" height="26.90" fill="#f4f4f4"/><rect x="583.44" y="571.20" width="34.61" height="26.90" fill="#f4f4f4"/><rect x="617.75" y="571.20" width="34.61" height="26.90" fill="#dcdcdc"/><rect x="652.06" y="571.20" width="34.61" height="26.90" fill="#dcdcdc"/><rect x="686.38" y="571.20" width="34.61" height="26.90" fill="#dcdcdc"/><rect x="720.69" y="571.20" width="34.61" height="26.90" fill="#dcdcdc"/><rect x="206" y="278.10" width="549" height="1" fill="#bfbfbf"/><rect x="206" y="304.70" width="549" height="1" fill="#bfbfbf"/><rect x="206" y="331.30" width="549" height="1" fill="#bfbfbf"/><rect x="206" y="357.90" width="549" height="1" fill="#bfbfbf"/><rect x="206" y="384.50" width="549" height="1" fill="#bfbfbf"/><rect x="206" y="411.10" width="549" height="1" fill="#bfbfbf"/><rect x="206" y="437.70" width="549" height="1" fill="#bfbfbf"/><rect x="206" y="464.30" width="549" height="1" fill="#bfbfbf"/><rect x="206" y="490.90" width="549" height="1" fill="#bfbfbf"/><rect x="206" y="517.50" width="549" height="1" fill="#bfbfbf"/><rect x="206" y="544.10" width="549" height="1" fill="#bfbfbf"/><rect x="206" y="570.70" width="549" height="1" fill="#bfbfbf"/><rect x="239.81" y="252" width="1" height="345.79999999999995" fill="#bdbdbd" opacity="0.85"/><rect x="274.12" y="252" width="1" height="345.79999999999995" fill="#bdbdbd" opacity="0.85"/><rect x="308.44" y="252" width="1" height="345.79999999999995" fill="#bdbdbd" opacity="0.85"/><rect x="342.75" y="252" width="1" height="345.79999999999995" fill="#bdbdbd" opacity="0.85"/><rect x="377.06" y="252" width="1" height="345.79999999999995" fill="#bdbdbd" opacity="0.85"/><rect x="411.38" y="252" width="1" height="345.79999999999995" fill="#bdbdbd" opacity="0.85"/><rect x="445.69" y="252" width="1" height="345.79999999999995" fill="#bdbdbd" opacity="0.85"/><rect x="480.00" y="252" width="1" height="345.79999999999995" fill="#bdbdbd" opacity="0.85"/><rect x="514.31" y="252" width="1" height="345.79999999999995" fill="#bdbdbd" opacity="0.85"/><rect x="548.62" y="252" width="1" height="345.79999999999995" fill="#bdbdbd" opacity="0.85"/><rect x="582.94" y="252" width="1" height="345.79999999999995" fill="#bdbdbd" opacity="0.85"/><rect x="617.25" y="252" width="1" height="345.79999999999995" fill="#bdbdbd" opacity="0.85"/><rect x="651.56" y="252" width="1" height="345.79999999999995" fill="#bdbdbd" opacity="0.85"/><rect x="685.88" y="252" width="1" height="345.79999999999995" fill="#bdbdbd" opacity="0.85"/><rect x="720.19" y="252" width="1" height="345.79999999999995" fill="#bdbdbd" opacity="0.85"/></g><rect x="403.10" y="395.90" width="17" height="5.2" fill="#0a63f0"/><rect x="437.50" y="395.90" width="17" height="5.2" fill="#0a63f0"/><rect x="712.00" y="315.90" width="17" height="5.2" fill="#0a63f0"/><rect x="574.80" y="528.90" width="17" height="5.2" fill="#0a63f0"/></svg><div class="t" style="left:183.15px;top:261.37px;font-size:9.604px;line-height:9.604px;color:#1d1f24;font-weight:bold;letter-spacing:0.960px;transform:scaleX(1.141);transform-origin:0 0;">C4</div><div class="t" style="left:185.24px;top:288.14px;font-size:8.457px;line-height:8.457px;color:#1d1f24;font-weight:bold;letter-spacing:0.846px;transform:scaleX(0.992);transform-origin:0 0;">B3</div><div class="t" style="left:182.08px;top:315.30px;font-size:8.051px;line-height:8.051px;color:#f0f0f0;font-weight:normal;letter-spacing:0.805px;transform:scaleX(1.201);transform-origin:0 0;">A#3</div><div class="t" style="left:185.06px;top:341.12px;font-size:8.598px;line-height:8.598px;color:#1d1f24;font-weight:bold;letter-spacing:0.860px;transform:scaleX(1.112);transform-origin:0 0;">A3</div><div class="t" style="left:181.63px;top:367.78px;font-size:8.898px;line-height:8.898px;color:#f0f0f0;font-weight:normal;letter-spacing:0.890px;transform:scaleX(1.053);transform-origin:0 0;">G#3</div><div class="t" style="left:184.94px;top:394.72px;font-size:8.598px;line-height:8.598px;color:#1d1f24;font-weight:bold;letter-spacing:0.860px;transform:scaleX(1.029);transform-origin:0 0;">G3</div><div class="t" style="left:182.03px;top:421.60px;font-size:8.051px;line-height:8.051px;color:#f0f0f0;font-weight:normal;letter-spacing:0.805px;transform:scaleX(1.161);transform-origin:0 0;">F#3</div><div class="t" style="left:185.63px;top:447.54px;font-size:8.457px;line-height:8.457px;color:#1d1f24;font-weight:bold;letter-spacing:0.846px;transform:scaleX(1.016);transform-origin:0 0;">F3</div><div class="t" style="left:185.10px;top:474.34px;font-size:8.457px;line-height:8.457px;color:#1d1f24;font-weight:bold;letter-spacing:0.846px;transform:scaleX(1.066);transform-origin:0 0;">E3</div><div class="t" style="left:181.41px;top:501.38px;font-size:8.192px;line-height:8.192px;color:#f0f0f0;font-weight:normal;letter-spacing:0.819px;transform:scaleX(1.170);transform-origin:0 0;">D#3</div><div class="t" style="left:185.21px;top:527.52px;font-size:8.598px;line-height:8.598px;color:#1d1f24;font-weight:bold;letter-spacing:0.860px;transform:scaleX(1.031);transform-origin:0 0;">D3</div><div class="t" style="left:181.41px;top:555.10px;font-size:8.051px;line-height:8.051px;color:#f0f0f0;font-weight:normal;letter-spacing:0.805px;transform:scaleX(1.191);transform-origin:0 0;">C#3</div><div class="t" style="left:183.35px;top:579.39px;font-size:10.853px;line-height:10.853px;color:#1d1f24;font-weight:bold;letter-spacing:1.085px;transform:scaleX(1.020);transform-origin:0 0;">C3</div><div class="abs" style="left:778.2px;top:251.7px;width:9px;height:347px;border-radius:4.5px;background:#2a2e36"></div><div class="abs" style="left:778px;top:400.4px;width:9px;height:35.2px;border-radius:4.5px;background:#efefef"></div><div class="t" style="left:820.12px;top:193.15px;font-size:11.030px;line-height:11.030px;color:#ececec;font-weight:bold;letter-spacing:1.103px;transform:scaleX(1.055);transform-origin:0 0;">Pitch</div><div class="abs" style="left:877px;top:176px;width:45px;height:45px;border-radius:8px;background:radial-gradient(circle at 50% 50%,#2a66f8 0%,#0d4df6 55%,#0a48f5 100%);box-shadow:0 2px 4px rgba(0,0,0,0.45)"></div><svg class="abs" style="left:889px;top:188px" width="20" height="20" viewBox="889 188 20 20"><path d="M902.9,191.9 L896.3,198.5 A2.12,2.12 0 0 0 899.3,201.5 L905.9,194.9 M896.4,201.4 L892.3,205.5" fill="none" stroke="#f2f2f2" stroke-width="1.5" stroke-linecap="round"/></svg><div class="abs" style="left:828px;top:243.4px;width:75px;height:29px;background:linear-gradient(90deg,rgba(42,46,54,0) 0%,rgba(42,46,54,0.55) 20%,rgba(42,46,54,0.8) 50%,rgba(42,46,54,0.55) 80%,rgba(42,46,54,0) 100%)"></div><svg class="abs" style="left:820px;top:250px" width="86" height="16" viewBox="820 250 86 16"><path d="M823.5,257.9 L832.4,252.5 V263.2 Z M901.6,257.9 L893.2,252.5 V263.2 Z" fill="#595c63"/></svg><div class="t" style="left:853.06px;top:252.78px;font-size:12.263px;line-height:12.263px;color:#ececec;font-weight:bold;letter-spacing:1.226px;transform:scaleX(1.078);transform-origin:0 0;">C3</div><div class="abs" style="left:877px;top:295px;width:45px;height:45px;border-radius:8px;background:#2b2f38;box-shadow:0 2px 4px rgba(0,0,0,0.35)"></div><svg class="abs" style="left:889px;top:307px" width="22" height="22" viewBox="889 307 22 22"><circle cx="899.6" cy="318.4" r="6.7" fill="#51555c"/><path d="M897.6,309.3 H901.6 L899.6,311.4 Z" fill="#51555c"/><rect x="898.9" y="310.5" width="1.4" height="2.4" fill="#51555c"/><path d="M904.4,312.6 L906,311" stroke="#51555c" stroke-width="1.5"/><path d="M898.2,320.6 L902.6,315.4" stroke="#2b2f38" stroke-width="1.2"/></svg><div class="t" style="left:810.93px;top:312.92px;font-size:10.485px;line-height:10.485px;color:#4e525a;font-weight:bold;letter-spacing:1.049px;transform:scaleX(1.102);transform-origin:0 0;">Duration</div><div class="t" style="left:889.39px;top:347.51px;font-size:12.712px;line-height:12.712px;color:#ececec;font-weight:bold;letter-spacing:1.271px;transform:scaleX(1.017);transform-origin:0 0;">100</div><div class="abs" style="left:812.2px;top:366.3px;width:100.5px;height:7.7px;border-radius:3.9px;background:#0a4cf6"></div><div class="abs" style="left:877px;top:396px;width:45px;height:45px;border-radius:8px;background:#2b2f38;box-shadow:0 2px 4px rgba(0,0,0,0.35)"></div><svg class="abs" style="left:886px;top:406px" width="26" height="24" viewBox="886 406 26 24"><path d="M906.6,412.6 C906.2,410.6 903.2,410.3 901.6,412.6 C900.4,414.4 898.6,421.5 896.8,424.4 C895.6,426.4 893.4,426.6 892.6,424.8" fill="none" stroke="#5d6067" stroke-width="1.5" stroke-linecap="round"/><path d="M897.6,417.6 H903.6" stroke="#5d6067" stroke-width="1.2"/></svg><div class="t" style="left:812.02px;top:413.86px;font-size:10.943px;line-height:10.943px;color:#4e525a;font-weight:bold;letter-spacing:1.094px;transform:scaleX(1.047);transform-origin:0 0;">Velocity</div><div class="t" style="left:891.22px;top:448.69px;font-size:12.853px;line-height:12.853px;color:#ececec;font-weight:bold;letter-spacing:1.285px;transform:scaleX(1.168);transform-origin:0 0;">80</div><div class="abs" style="left:812.2px;top:467.7px;width:100.5px;height:7.3px;border-radius:3.7px;background:#2a2e36"></div><div class="abs" style="left:812.2px;top:467.7px;width:80.4px;height:7.3px;border-radius:3.7px 0 0 3.7px;background:#0a4cf6"></div><div class="abs" style="left:877px;top:497px;width:45px;height:45px;border-radius:8px;background:#2b2f38;box-shadow:0 2px 4px rgba(0,0,0,0.35)"></div><svg class="abs" style="left:880px;top:500px" width="40" height="40" viewBox="880 500 40 40"><circle cx="894" cy="514.6" r="2.3" fill="#64676d"/><circle cx="897.9" cy="512.9" r="0.9" fill="#64676d"/><circle cx="901.5" cy="512.6" r="0.6" fill="#64676d"/><circle cx="905.2" cy="513.4" r="2.1" fill="#64676d"/><circle cx="900.6" cy="516.3" r="2.4" fill="#64676d"/><circle cx="892.6" cy="519.7" r="1.1" fill="#64676d"/><circle cx="896.9" cy="521.2" r="2.1" fill="#64676d"/><circle cx="900.9" cy="520.6" r="1.0" fill="#64676d"/><circle cx="903.7" cy="518.9" r="1.1" fill="#64676d"/><circle cx="906.4" cy="517.9" r="0.9" fill="#64676d"/><circle cx="894" cy="524.9" r="2.1" fill="#64676d"/><circle cx="897.7" cy="526.3" r="0.8" fill="#64676d"/><circle cx="900.6" cy="525.5" r="0.9" fill="#64676d"/><circle cx="904.5" cy="523.9" r="2.4" fill="#64676d"/></svg><div class="t" style="left:811.04px;top:514.89px;font-size:10.728px;line-height:10.728px;color:#4e525a;font-weight:bold;letter-spacing:1.073px;transform:scaleX(1.054);transform-origin:0 0;">Density</div><div class="abs" style="left:812.2px;top:566.2px;width:71.7px;height:25.2px;border-radius:3px 0 0 3px;background:#262a32"></div><div class="abs" style="left:885.2px;top:566.2px;width:27.5px;height:25.2px;border-radius:0 3px 3px 0;background:#262a32"></div><svg class="abs" style="left:815px;top:570px" width="18" height="18" viewBox="815 570 18 18"><ellipse cx="820.5" cy="578.5" rx="2.3" ry="4" fill="#595c63"/><ellipse cx="820.8" cy="584.5" rx="1.5" ry="1.3" fill="#595c63"/><ellipse cx="826.5" cy="576" rx="2.3" ry="4" fill="#595c63"/><ellipse cx="826.2" cy="582" rx="1.5" ry="1.3" fill="#595c63"/></svg><div class="t" style="left:847.35px;top:575.04px;font-size:9.166px;line-height:9.166px;color:#ececec;font-weight:bold;letter-spacing:0.000px;transform:scaleX(1.110);transform-origin:0 0;">2</div><svg class="abs" style="left:868px;top:571px" width="12" height="16" viewBox="868 571 12 16"><path d="M871.5,578 L874.4,574 L877.3,578 Z M871.5,580 L874.4,584.4 L877.3,580 Z" fill="#5a5d64"/></svg><svg class="abs" style="left:888px;top:572px" width="22" height="14" viewBox="888 572 22 14"><path d="M891.3,579.5 L896.5,575.8 V578.2 C901,578.2 904.5,579.4 906.8,583.2 C904,581.3 901,580.9 896.5,580.9 V583.3 Z" fill="#5d6067"/></svg><div class="t" style="left:26.94px;top:658.69px;font-size:10.749px;line-height:10.749px;color:#ececec;font-weight:bold;letter-spacing:1.075px;transform:scaleX(0.924);transform-origin:0 0;">Presets</div><svg class="abs" style="left:72px;top:652px" width="24" height="24" viewBox="72 652 24 24"><rect x="74" y="654.6" width="8.4" height="8.4" fill="#eeeeee"/><rect x="84" y="654.6" width="8.4" height="8.4" fill="#eeeeee"/><rect x="74" y="664.4" width="8.4" height="8.4" fill="#eeeeee"/><rect x="84" y="664.4" width="8.4" height="8.4" fill="#eeeeee"/></svg><div class="abs" style="left:157.1px;top:652px;width:25px;height:23.1px;border-radius:5px;background:#1e232a"></div><div class="abs" style="left:194px;top:652px;width:25px;height:23.1px;border-radius:5px;background:#1e232a"></div><svg class="abs" style="left:155px;top:650px" width="70" height="28" viewBox="155 650 70 28"><path d="M172.6,658.8 L167.3,663.9 L172.6,669" fill="none" stroke="#f0f0f0" stroke-width="1.9"/><path d="M203.6,658.8 L208.9,663.9 L203.6,669" fill="none" stroke="#f0f0f0" stroke-width="1.9"/></svg><div class="abs" style="left:260.3px;top:646.8px;width:429px;height:33.1px;border-radius:16.6px;background:#1e232a"></div><div class="abs" style="left:439.8px;top:650.1px;width:69.2px;height:26.6px;border-radius:13.3px;background:#0a4cf6;box-shadow:1px 2px 3px rgba(0,0,0,0.5)"></div><div class="t" style="left:288.82px;top:659.89px;font-size:10.168px;line-height:10.168px;color:#4d5159;font-weight:bold;letter-spacing:1.017px;transform:scaleX(1.204);transform-origin:0 0;">-24</div><div class="t" style="left:377.99px;top:659.89px;font-size:10.168px;line-height:10.168px;color:#4d5159;font-weight:bold;letter-spacing:1.017px;transform:scaleX(1.030);transform-origin:0 0;">-12</div><div class="t" style="left:552.27px;top:659.89px;font-size:10.168px;line-height:10.168px;color:#4d5159;font-weight:bold;letter-spacing:1.017px;">+12</div><div class="t" style="left:638.33px;top:659.89px;font-size:10.168px;line-height:10.168px;color:#4d5159;font-weight:bold;letter-spacing:1.017px;transform:scaleX(1.112);transform-origin:0 0;">+24</div><div class="t" style="left:470.59px;top:659.63px;font-size:10.593px;line-height:10.593px;color:#ececec;font-weight:bold;letter-spacing:0.000px;transform:scaleX(1.211);transform-origin:0 0;">0</div><div class="abs" style="left:730.6px;top:652px;width:24.4px;height:23px;border-radius:5px;background:#1e232a"></div><div class="abs" style="left:767.3px;top:652px;width:24.4px;height:23px;border-radius:5px;background:#1e232a"></div><svg class="abs" style="left:730px;top:652px" width="64" height="24" viewBox="730 652 64 24"><path d="M736.5,660.2 L742.7,666.3 L748.9,660.2" fill="none" stroke="#f0f0f0" stroke-width="1.9"/><path d="M773.6,667 L779.8,660.8 L786,667" fill="none" stroke="#f0f0f0" stroke-width="1.9"/></svg><svg class="abs" style="left:840px;top:632px" width="34" height="34" viewBox="840 632 34 34">
<path d="M855.2,659.7 A11.4,11.4 0 1 1 859.2,659.7 A2,2 0 0 0 855.2,659.7 Z" fill="#ececec"/>
<circle cx="851.3" cy="648" r="1.25" fill="#1e232a"/><circle cx="853.2" cy="644.2" r="1.25" fill="#1e232a"/><circle cx="857.2" cy="642.4" r="1.25" fill="#1e232a"/><circle cx="861.3" cy="644.2" r="1.25" fill="#1e232a"/><circle cx="863.1" cy="648" r="1.25" fill="#1e232a"/>
</svg><svg class="abs" style="left:920px;top:688px" width="12" height="11" viewBox="920 688 12 11"><path d="M924,699 L932,691 M928,699 L932,695" stroke="#5a5d64" stroke-width="0.8"/></svg>
</body></html>
